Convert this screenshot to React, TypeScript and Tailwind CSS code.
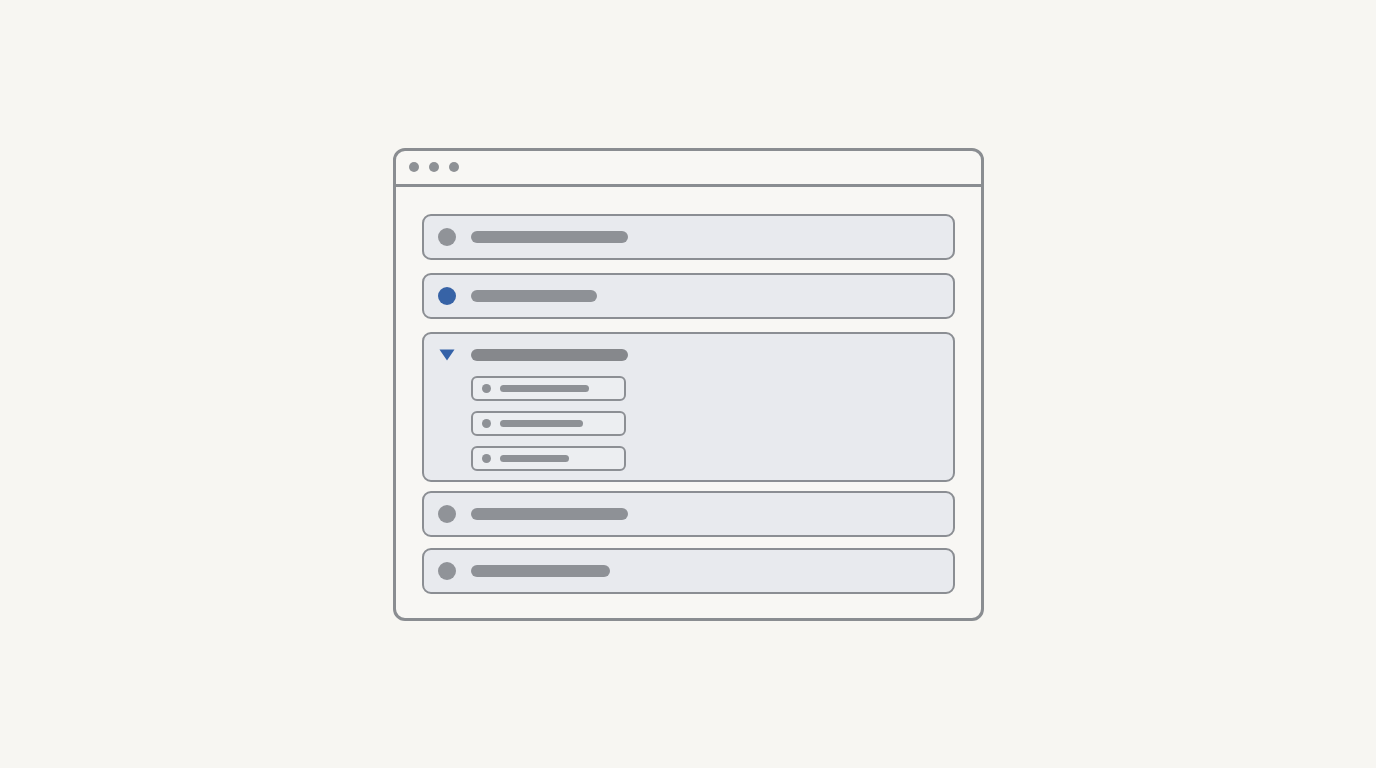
const rows = [
  { kind: "dot", bar: 157 },
  { kind: "active", bar: 126 },
  { kind: "open", bar: 157, children: [89, 83, 69] },
  { kind: "dot", bar: 157 },
  { kind: "dot", bar: 139 },
];

const gaps = ["", "mt-[13px]", "mt-[13px]", "mt-[9px]", "mt-[11px]"];

function Marker({ kind }: { kind: string }) {
  if (kind === "open") {
    return (
      <svg width="18" height="18" viewBox="0 0 18 18" className="shrink-0">
        <polygon points="1.5,3.5 16.5,3.5 9,14.5" fill="#3462a8" />
      </svg>
    );
  }
  return (
    <div
      className={
        kind === "active"
          ? "h-[18px] w-[18px] shrink-0 rounded-full bg-[#3763a6]"
          : "h-[18px] w-[18px] shrink-0 rounded-full bg-[#909398]"
      }
    />
  );
}

function SubItem({ bar }: { bar: number }) {
  return (
    <div className="flex h-[25px] w-[155px] items-center gap-[9px] rounded-[6px] border-2 border-[#8c8f94] bg-[#eceef1] pl-[9px]">
      <div className="h-[9px] w-[9px] shrink-0 rounded-full bg-[#8e9196]" />
      <div className="h-[7px] rounded-full bg-[#8e9196]" style={{ width: bar }} />
    </div>
  );
}

export default function App() {
  return (
    <div className="flex h-[768px] w-full items-center justify-center bg-[#f7f6f2]">
      <div className="w-[591px] overflow-hidden rounded-[12px] border-[3px] border-[#8a8d91] bg-[#f8f7f4]">
        <div className="flex h-[36px] items-center gap-[10px] border-b-[3px] border-[#8a8d91] pl-[13px]">
          <div className="h-[10px] w-[10px] rounded-full bg-[#8e9195]" />
          <div className="h-[10px] w-[10px] rounded-full bg-[#8e9195]" />
          <div className="h-[10px] w-[10px] rounded-full bg-[#8e9195]" />
        </div>
        <div className="px-[26px] pb-[24px] pt-[27px]">
          {rows.map((r, i) => (
            <div
              key={i}
              className={`${gaps[i]} rounded-[9px] border-2 border-[#8b8e93] bg-[#e8eaee]`}
            >
              <div className="flex h-[42px] items-center gap-[15px] pl-[14px]">
                <Marker kind={r.kind} />
                <div
                  className={
                    r.kind === "open"
                      ? "h-[12px] rounded-full bg-[#86888c]"
                      : "h-[12px] rounded-full bg-[#8e9196]"
                  }
                  style={{ width: r.bar }}
                />
              </div>
              {r.children && (
                <div className="flex flex-col gap-[10px] pb-[9px] pl-[47px]">
                  {r.children.map((c, j) => (
                    <SubItem key={j} bar={c} />
                  ))}
                </div>
              )}
            </div>
          ))}
        </div>
      </div>
    </div>
  );
}
